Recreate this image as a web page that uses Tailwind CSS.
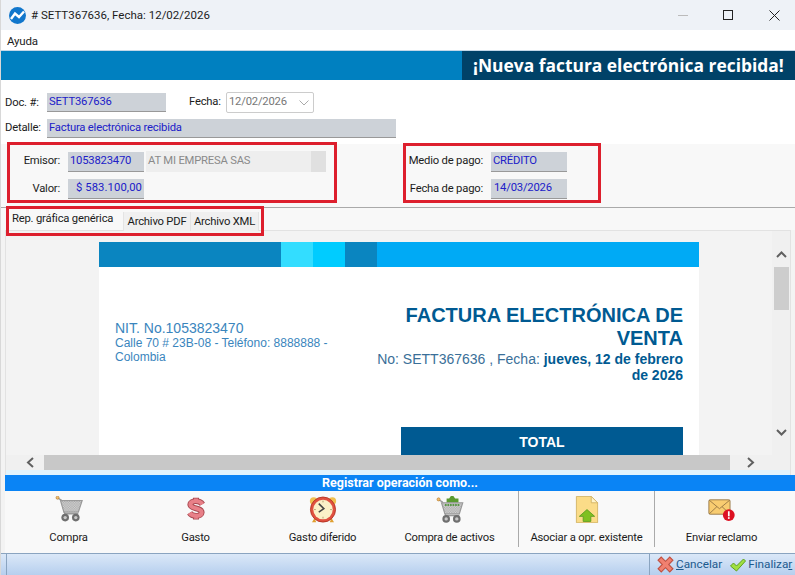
<!DOCTYPE html>
<html lang="es">

<head>
    <meta charset="UTF-8">
    <title>Factura</title>
    <script src="https://cdn.jsdelivr.net/npm/@tailwindcss/browser@4"></script>
</head>

<body class="bg-[#f3f3f3] overflow-hidden">
    <div class="w-[795px] h-[575px] flex flex-col overflow-hidden font-['Roboto',sans-serif] text-[11.25px] tracking-[-0.2px] text-[#1c1c1c] border-l border-[#d8d8d8]">

        <!-- title bar -->
        <div class="h-[30px] shrink-0 flex items-center bg-[#eef2f7] pl-[8px]">
            <svg class="w-[17px] h-[17px]" viewBox="0 0 17 17">
                <circle cx="8.5" cy="8.5" r="8.5" fill="#1177cc" />
                <path d="M2 12 L6 6.5 L10 10 L15 4.5" fill="none" stroke="#fff" stroke-width="2.4" />
            </svg>
            <span class="ml-[5px] text-[11.5px] tracking-normal pt-[1px]">
                # SETT367636, Fecha: 12/02/2026
            </span>
            <div class="ml-auto flex items-center">
                <div class="w-[10px] h-px bg-[#bbb]"></div>
                <div class="ml-[35px] w-[10px] h-[10px] border border-[#222]"></div>
                <svg class="ml-[36px] mr-[15px] w-[11px] h-[11px]" viewBox="0 0 11 11">
                    <path d="M.5 .5 L10.5 10.5 M10.5 .5 L.5 10.5" stroke="#222" stroke-width="1" />
                </svg>
            </div>
        </div>

        <!-- menu -->
        <div class="h-[21px] shrink-0 flex items-center bg-white pl-[6px] pt-[3px] border-b border-[#c4d8e8] text-[11.5px]">Ayuda</div>

        <!-- banner -->
        <div class="h-[29px] shrink-0 flex justify-end bg-[#0080c0]">
            <div class="w-[333px] bg-[#004268] text-white font-bold text-[17.4px] tracking-normal font-['Open_Sans',sans-serif] flex items-center pl-[11px] whitespace-nowrap">
                ¡Nueva factura electrónica recibida!
            </div>
        </div>

        <!-- doc fields -->
        <div class="h-[64px] shrink-0 bg-white pl-[4px] pt-[12px]">
            <div class="flex items-center h-[21px]">
                <span class="w-[42px] pt-[1px]">Doc. #:</span>
                <div class="w-[119px] h-[19px] bg-[#cdd2d8] border-b border-[#999] text-[#2020c8] pl-[2px] leading-[18px]">SETT367636</div>
                <span class="ml-[23px] w-[37px]">Fecha:</span>
                <div class="w-[88px] h-[21px] bg-white border border-[#ccc] rounded-[2px] text-[#777] flex items-center pl-[2px]">
                    12/02/2026
                    <svg class="ml-auto mr-[4px] w-[10px] h-[6px]" viewBox="0 0 10 6">
                        <path d="M.5 .5 L5 5 L9.5 .5" fill="none" stroke="#aaa" />
                    </svg>
                </div>
            </div>
            <div class="flex items-center h-[20px] mt-[5px]">
                <span class="w-[42px]">Detalle:</span>
                <div class="w-[349px] h-[19px] bg-[#cdd2d8] border-b border-[#999] text-[#2020c8] pl-[2px] leading-[18px]">Factura electrónica recibida</div>
            </div>
        </div>

        <!-- emisor / pago -->
        <div class="h-[64px] shrink-0 bg-[#f8f8f8] border-b border-[#aaa] flex">
            <div class="relative ml-[6px] -mt-[2px] w-[330px] h-[61px] border-[3px] border-[#dd1f2d] pt-[6px]">
                <div class="flex items-center h-[21px]">
                    <span class="w-[50px] text-right">Emisor:</span>
                    <div class="ml-[8px] w-[76px] h-[20px] bg-[#cdd2d8] border-b border-[#999] text-[#2020c8] pl-[2px] leading-[18px]">1053823470</div>
                    <div class="ml-[2px] w-[180px] h-[21px] bg-[#eeeeee] flex items-center pl-[2px] text-[#8a8a8a]">
                        AT MI EMPRESA SAS
                        <div class="ml-auto w-[15px] h-full bg-[#e0e0e0]"></div>
                    </div>
                </div>
                <div class="flex items-center h-[20px] mt-[7px]">
                    <span class="w-[50px] text-right">Valor:</span>
                    <div class="ml-[8px] w-[76px] h-[20px] bg-[#cdd2d8] border-b border-[#999] text-[#2020c8] pr-[2px] text-right leading-[18px] tracking-[0.1px] whitespace-nowrap">$ 583.100,00</div>
                </div>
            </div>
            <div class="relative ml-[66px] -mt-[1px] w-[198px] h-[60px] border-[3px] border-[#dd1f2d] pt-[5px]">
                <div class="flex items-center h-[21px]">
                    <span class="w-[77px] text-right whitespace-nowrap">Medio de pago:</span>
                    <div class="ml-[8px] w-[76px] h-[20px] bg-[#cdd2d8] border-b border-[#999] text-[#2020c8] pl-[2px] leading-[18px]">CRÉDITO</div>
                </div>
                <div class="flex items-center h-[20px] mt-[7px]">
                    <span class="w-[77px] text-right whitespace-nowrap">Fecha de pago:</span>
                    <div class="ml-[8px] w-[76px] h-[20px] bg-[#cdd2d8] border-b border-[#999] text-[#2020c8] pl-[3px] leading-[18px]">14/03/2026</div>
                </div>
            </div>
        </div>

        <!-- tabs -->
        <div class="h-[22px] shrink-0 bg-[#f8f8f8] flex items-start">
            <div class="relative z-10 ml-[5px] -mt-[2px] w-[258px] h-[30px] border-[3px] border-[#dd1f2d] flex items-start">
                <div class="w-[114px] h-[21px] bg-[#f8f8f8] pl-[3px] leading-[20px] whitespace-nowrap">Rep. gráfica genérica</div>
                <div class="w-[68px] h-[19px] mt-[3px] bg-[#f0f0f0] border-x border-[#e4e4e4] text-center leading-[20px] whitespace-nowrap">Archivo PDF</div>
                <div class="w-[68px] h-[19px] mt-[3px] bg-[#f0f0f0] border-r border-[#e4e4e4] text-center leading-[20px] whitespace-nowrap">Archivo XML</div>
            </div>
        </div>

        <!-- document preview -->
        <div class="h-[245px] shrink-0 mr-[4px] ml-[4px] border border-[#e2e2e2] border-b-0 flex flex-col bg-[#f3f3f3]">
            <div class="h-[224px] flex overflow-hidden">
                <div class="w-[767px] h-[224px] overflow-hidden pl-[93px] pt-[11px] tracking-normal font-['Liberation_Sans',sans-serif]">
                    <div class="w-[600px] h-[300px] bg-white">
                        <div class="h-[25px] flex">
                            <div class="w-[182px] bg-[#0a85c0]"></div>
                            <div class="w-[32px] bg-[#33ddff]"></div>
                            <div class="w-[32px] bg-[#00ccff]"></div>
                            <div class="w-[32px] bg-[#0a85c0]"></div>
                            <div class="flex-1 bg-[#00aaf5]"></div>
                        </div>
                        <div class="flex pl-[16px] pr-[16px]">
                            <div class="w-[232px] pt-[53px] text-[#3a85bd]">
                                <div class="text-[14px] leading-[16px]">NIT. No.1053823470</div>
                                <div class="text-[12px] leading-[14px]">Calle 70 # 23B-08 - Teléfono: 8888888 - Colombia</div>
                            </div>
                            <div class="flex-1 pt-[37px] pl-[30px] text-right text-[#005a92]">
                                <div class="text-[20px] font-bold leading-[23px]">FACTURA ELECTRÓNICA DE VENTA</div>
                                <div class="text-[14px] leading-[16px] mt-[1px] text-[#3a6f98]">No: SETT367636 , Fecha: <b class="text-[#005a92]">jueves, 12 de febrero de 2026</b></div>
                                <div class="ml-[24px] mt-[44px] h-[40px] bg-[#005a92] text-white font-bold text-[14px] text-center pt-[5px]">TOTAL</div>
                            </div>
                        </div>
                    </div>
                </div>
                <!-- vertical scrollbar -->
                <div class="w-[18px] h-full flex flex-col items-center bg-[#f0f0f0] pt-[20px]">
                    <svg class="w-[11px] h-[7px]" viewBox="0 0 11 7">
                        <path d="M1 6 L5.5 1.5 L10 6" fill="none" stroke="#606060" stroke-width="2" />
                    </svg>
                    <div class="w-[15px] h-[43px] mt-[9px] bg-[#cdcdcd]"></div>
                    <svg class="w-[11px] h-[7px] mt-[119px]" viewBox="0 0 11 7">
                        <path d="M1 1 L5.5 5.5 L10 1" fill="none" stroke="#606060" stroke-width="2" />
                    </svg>
                </div>
            </div>
            <!-- horizontal scrollbar -->
            <div class="h-[15px] flex items-center bg-[#f0f0f0]">
                <svg class="ml-[20px] w-[9px] h-[11px]" viewBox="0 0 9 11">
                    <path d="M7 1 L2 5.5 L7 10" fill="none" stroke="#606060" stroke-width="2" />
                </svg>
                <div class="ml-[9px] w-[686px] h-full bg-[#c8c8c8]"></div>
                <svg class="ml-[16px] w-[9px] h-[11px]" viewBox="0 0 9 11">
                    <path d="M2 1 L7 5.5 L2 10" fill="none" stroke="#606060" stroke-width="2" />
                </svg>
            </div>
            <div class="h-[5px] bg-[#e2f4fd]"></div>
        </div>

        <!-- action bar -->
        <div class="h-[16px] shrink-0 ml-[4px] bg-[#0a84f5] text-white font-bold text-[12.5px] tracking-normal leading-[16px] text-center">
            Registrar operación como...
        </div>
        <div class="h-[62px] shrink-0 ml-[4px] bg-[#f9f9f9] flex pb-[6px]">
            <div class="w-[127px] flex flex-col items-center">
                <svg class="w-[32px] h-[32px] mt-[5px]" viewBox="0 0 32 32">
                    <defs>
                        <pattern id="chk" width="2" height="2" patternUnits="userSpaceOnUse">
                            <rect width="2" height="2" fill="#d4d4d4" />
                            <rect width="1" height="1" fill="#aaa" />
                            <rect x="1" y="1" width="1" height="1" fill="#aaa" />
                        </pattern>
                    </defs>
                    <path d="M2 2 L7 5 L11 21 H27" fill="none" stroke="#999" stroke-width="1.6" />
                    <circle cx="2.5" cy="2" r="1.8" fill="#f0c070" stroke="#b07020" stroke-width=".7" />
                    <path d="M6 5.500 H31.500 L27 19 H10 Z" fill="url(#chk)" stroke="#999" stroke-width="1.400" />
                    <circle cx="11.500" cy="25.500" r="4.500" fill="#6f6f6f" />
                    <circle cx="11.500" cy="25.500" r="2" fill="#c8c8c8" />
                    <circle cx="24" cy="25.500" r="4.500" fill="#6f6f6f" />
                    <circle cx="24" cy="25.500" r="2" fill="#c8c8c8" />
                </svg>
                <span class="mt-[7px]">Compra</span>
            </div>
            <div class="w-[127px] flex flex-col items-center">
                <svg class="w-[18px] h-[28px] mt-[6px]" viewBox="4 0 24 32" preserveAspectRatio="none">
                    <path d="M16 1 V6 M16 26 V31 M24.500 10 C21 4 8.500 4.500 8.500 10.500 C8.500 17 23.500 14.500 23.500 21 C23.500 27.500 11 27.500 7.500 22" fill="none" stroke="#a84850" stroke-width="8" />
                    <path d="M16 2 V6 M16 26 V30 M24.500 10 C21 4 8.500 4.500 8.500 10.500 C8.500 17 23.500 14.500 23.500 21 C23.500 27.500 11 27.500 7.500 22" fill="none" stroke="#e88088" stroke-width="5.400" />
                </svg>
                <span class="mt-[10px]">Gasto</span>
            </div>
            <div class="w-[127px] flex flex-col items-center">
                <svg class="w-[32px] h-[32px] mt-[5px]" viewBox="0 0 32 32">
                    <circle cx="5" cy="6" r="4.500" fill="#f0c050" />
                    <circle cx="27" cy="6" r="4.500" fill="#f0c050" />
                    <path d="M6 26 L3 31 H8 Z M26 26 L29 31 H24 Z" fill="#e0a030" />
                    <circle cx="16" cy="16" r="14.800" fill="#e05040" stroke="#b03020" />
                    <circle cx="16" cy="16" r="11.500" fill="#fbf0c8" />
                    <path d="M16 5.500 V7.500 M16 24.500 V26.500 M5.500 16 H7.500 M24.500 16 H26.500" stroke="#a89060" />
                    <path d="M11 9 L17 15 L11 19" fill="none" stroke="#444" stroke-width="1.800" />
                </svg>
                <span class="mt-[7px]">Gasto diferido</span>
            </div>
            <div class="w-[127px] flex flex-col items-center">
                <svg class="w-[32px] h-[32px] mt-[5px]" viewBox="0 0 32 32">
                    <path d="M2 4 L7 7 L11 23 H27" fill="none" stroke="#999" stroke-width="1.600" />
                    <circle cx="2.500" cy="4" r="1.800" fill="#f0c070" stroke="#b07020" stroke-width=".7" />
                    <path d="M12 3 H15 L17 0 H20 L22 3 H26 V8 H12 Z" fill="#5a9a30" />
                    <path d="M6 8 H31 L27 21 H10 Z" fill="url(#chk)" stroke="#999" stroke-width="1.400" />
                    <path d="M10 10.500 H27" stroke="#3a8a20" stroke-width="1.800" stroke-dasharray="2 1" />
                    <circle cx="11.500" cy="27" r="4.500" fill="#6f6f6f" />
                    <circle cx="11.500" cy="27" r="2" fill="#c8c8c8" />
                    <circle cx="24" cy="27" r="4.500" fill="#6f6f6f" />
                    <circle cx="24" cy="27" r="2" fill="#c8c8c8" />
                </svg>
                <span class="mt-[7px]">Compra de activos</span>
            </div>
            <div class="w-[136px] ml-[5px] border-l border-[#aaa] flex flex-col items-center">
                <svg class="w-[26px] h-[32px] mt-[5px]" viewBox="0 0 26 32">
                    <path d="M.5 .5 H18 L25.500 8 V31.500 H.5 Z" fill="#fbdc88" stroke="#d0b060" />
                    <path d="M18 .5 V8 H25.500 Z" fill="#fff4c8" stroke="#d0b060" />
                    <path d="M13 16 L22 24 H17.500 V30 H8.500 V24 H4 Z" fill="#80c020" stroke="#5a9a20" />
                </svg>
                <span class="mt-[7px] whitespace-nowrap">Asociar a opr. existente</span>
            </div>
            <div class="w-[134px] border-l border-[#aaa] flex flex-col items-center">
                <svg class="w-[32px] h-[32px] mt-[5px]" viewBox="0 0 32 32">
                    <rect x=".5" y="4.500" width="25" height="17" rx="1.500" fill="#f8cc70" stroke="#907040" />
                    <path d="M1 5 L13 15 L25 5 M1 21 L10 12.500 M25 21 L16 12.500" fill="none" stroke="#907040" />
                    <circle cx="24" cy="22.500" r="7" fill="#dd1122" />
                    <rect x="23" y="18" width="2" height="6" fill="#fff" />
                    <rect x="23" y="25" width="2" height="2" fill="#fff" />
                </svg>
                <span class="mt-[7px]">Enviar reclamo</span>
            </div>
        </div>

        <!-- status bar -->
        <div class="h-[22px] shrink-0 flex bg-gradient-to-b from-[#dbe8f8] to-[#b6cfee] border-t border-[#8aa4c0] pl-[5px]">
            <div class="w-[643px] border-l border-[#8aa4c0]"></div>
            <div class="flex-1 border-l border-[#8aa4c0] flex items-center pl-[7px] text-[#1c5a8e] text-[11.75px] tracking-normal">
                <svg class="w-[17px] h-[17px]" viewBox="0 0 16 16">
                    <path d="M1 4 L4 1 L8 5 L12 1 L15 4 L11 8 L15 12 L12 15 L8 11 L4 15 L1 12 L5 8 Z" fill="#f08070" stroke="#c05040" />
                </svg>
                <span class="ml-[2px]"><u>C</u>ancelar</span>
                <svg class="ml-[7px] w-[18px] h-[16px]" viewBox="0 0 17 16">
                    <path d="M1 9 L4 6 L7 9 L14 2 L16 4 L7 14 Z" fill="#a0e040" stroke="#60a020" />
                </svg>
                <span class="ml-[1px]">Finaliza<u>r</u></span>
            </div>
        </div>
    </div>
</body>

</html>
